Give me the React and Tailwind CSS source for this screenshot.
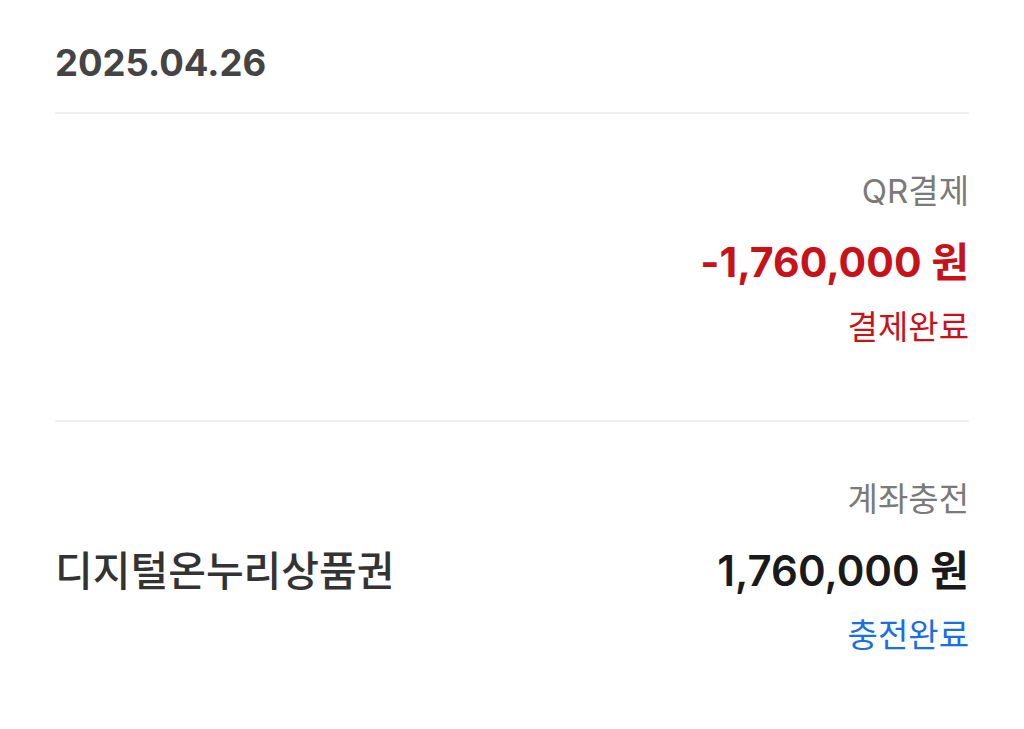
export default function App() {
  return (
    <div
      className="min-h-screen bg-white px-[55px]"
      style={{ fontFamily: 'Inter, "Noto Sans CJK KR", sans-serif' }}
    >
      <div className="pt-[39px] pb-[25px] text-[36.5px] font-bold leading-[48px] text-[#444444]">
        2025.04.26
      </div>
      <div className="h-[2px] bg-[#eeeeee]" />

      <div className="flex flex-col items-end pt-[55px] pb-[71px]">
        <div className="text-[33px] leading-[44px] text-[#7a7a7a]">QR결제</div>
        <div className="mt-[23px] text-[41px] font-bold leading-[52px] text-[#c8121a]">
          -1,760,000 원
        </div>
        <div className="mt-[17px] text-[33px] leading-[44px] text-[#c8121a]">결제완료</div>
      </div>
      <div className="h-[2px] bg-[#eeeeee]" />

      <div className="flex flex-col pt-[55px]">
        <div className="text-right text-[33px] leading-[44px] text-[#7a7a7a]">계좌충전</div>
        <div className="mt-[24px] flex items-center justify-between leading-[52px]">
          <span className="text-[41px] font-medium text-[#333333]">디지털온누리상품권</span>
          <span className="text-[42px] font-semibold text-[#1a1a1a]">1,760,000 원</span>
        </div>
        <div className="mt-[16px] text-right text-[33px] leading-[44px] text-[#1a6ee6]">충전완료</div>
      </div>
    </div>
  );
}
